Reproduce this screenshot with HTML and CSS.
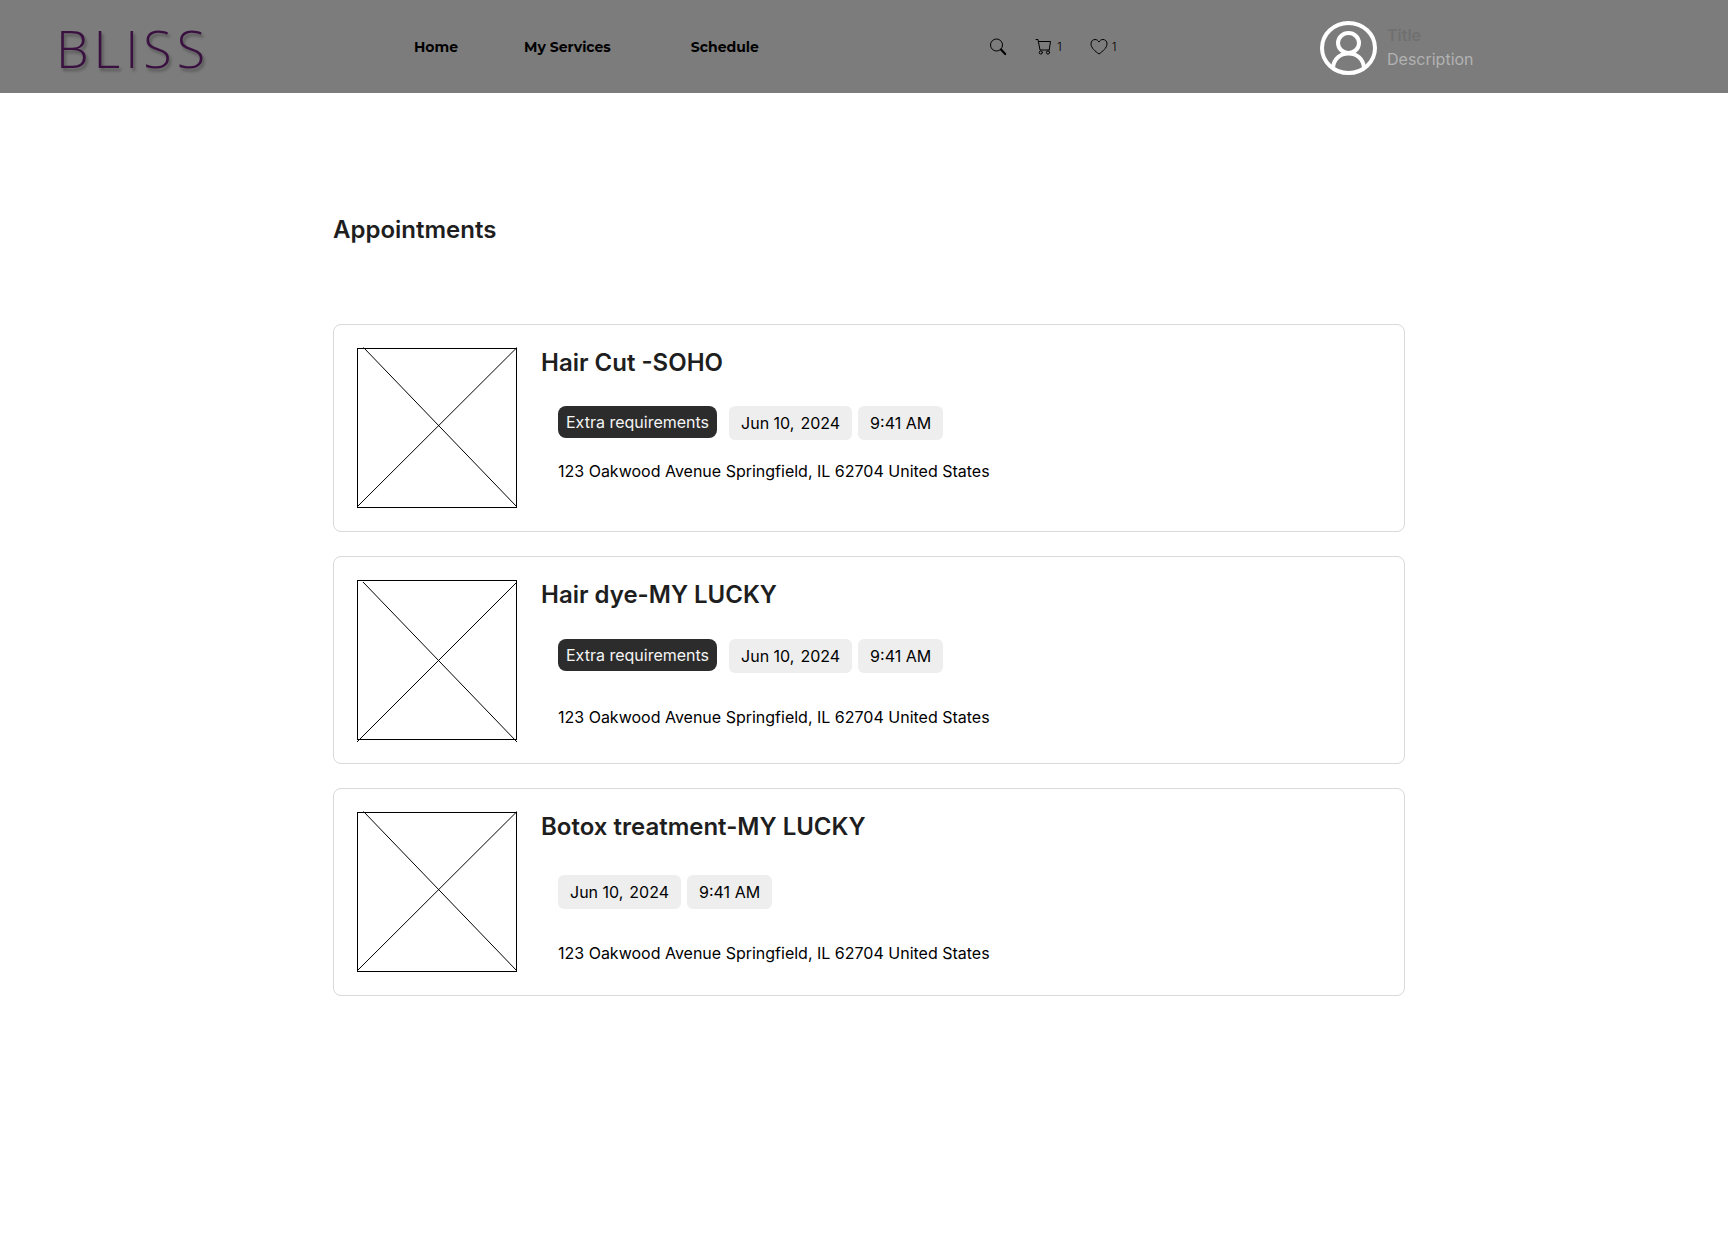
FILE: index.html
```html
<!DOCTYPE html>
<html lang="en">
<head>
<meta charset="utf-8">
<meta name="viewport" content="width=device-width, initial-scale=1">
<title>Bliss - Appointments</title>
<link rel="stylesheet" href="styles.css">
</head>
<body>
<header class="header">
  <a class="logo" href="#">BLISS</a>
  <nav class="nav" aria-label="Main">
    <a href="#">Home</a>
    <a href="#">My Services</a>
    <a href="#">Schedule</a>
  </nav>
  <div class="tools">
    <button class="tool" type="button" aria-label="Search">
      <svg width="18" height="18" viewBox="0 0 18 18" fill="none" stroke="currentColor"><circle cx="7.500" cy="7" r="6"/><path d="M12 11.6L16.200 16" stroke-width="2.2" stroke-linecap="round"/></svg>
    </button>
    <button class="tool" type="button" aria-label="Cart, 1 item">
      <svg width="18" height="18" viewBox="0 0 18 18" fill="none" stroke="currentColor" stroke-linejoin="round" stroke-linecap="round"><path d="M1 1.5h2l2 10.500h9.200M3.300 3.500h12.200l-1.300 8.500"/><circle cx="5.800" cy="14.500" r="1.600"/><circle cx="13" cy="14.500" r="1.600"/></svg>
      <span>1</span>
    </button>
    <button class="tool" type="button" aria-label="Favourites, 1 item">
      <svg width="18" height="18" viewBox="0 0 18 18" fill="none" stroke="currentColor" stroke-linejoin="round"><path d="M9 16C5.500 13.500 1 10 1 5.800 1 3 3 1.500 5 1.500c1.800 0 3.200 1 4 2.600.8-1.600 2.200-2.600 4-2.600 2 0 4 1.500 4 4.300C17 10 12.500 13.500 9 16z"/></svg>
      <span>1</span>
    </button>
  </div>
  <div class="profile">
    <svg class="avatar" width="58" height="56" viewBox="0 -1 58 56" fill="none" stroke="#fff" stroke-width="4"><ellipse cx="28.500" cy="28" rx="26.500" ry="25"/><ellipse cx="28.500" cy="23" rx="10.500" ry="10"/><path d="M13 47.500C14 39 20 33.500 28.500 33.500S43 39 44 47.500"/></svg>
    <div class="profile-text">
      <div class="profile-title">Title</div>
      <div class="profile-desc">Description</div>
    </div>
  </div>
</header>

<main class="main">
  <h1 class="page-title">Appointments</h1>
  <div class="cards">
    <article class="card">
      <svg class="thumb" width="160" height="160" viewBox="0 0 160 160" fill="none" stroke="#000" aria-hidden="true"><rect x=".5" y=".5" width="159" height="159"/><path d="M6.500-.5L160 159M160-.5L0 159"/></svg>
      <div class="body">
        <h2 class="card-title">Hair Cut -SOHO</h2>
        <div class="meta">
          <button class="tag" type="button">Extra requirements</button>
          <div class="when">
            <button class="pill" type="button"><span>Jun 10,</span> <span>2024</span></button>
            <button class="pill" type="button">9:41 AM</button>
          </div>
        </div>
        <p class="address">123 Oakwood Avenue Springfield, IL 62704 United States</p>
      </div>
    </article>
    <article class="card card-roomy">
      <svg class="thumb" width="160" height="160" viewBox="0 0 160 160" fill="none" stroke="#000" aria-hidden="true"><rect x=".5" y=".5" width="159" height="159"/><path d="M6 2L160 162M160 2L0 162"/></svg>
      <div class="body">
        <h2 class="card-title">Hair dye-MY LUCKY</h2>
        <div class="meta">
          <button class="tag" type="button">Extra requirements</button>
          <div class="when">
            <button class="pill" type="button"><span>Jun 10,</span> <span>2024</span></button>
            <button class="pill" type="button">9:41 AM</button>
          </div>
        </div>
        <p class="address">123 Oakwood Avenue Springfield, IL 62704 United States</p>
      </div>
    </article>
    <article class="card card-roomy card-plain">
      <svg class="thumb" width="160" height="160" viewBox="0 0 160 160" fill="none" stroke="#000" aria-hidden="true"><rect x=".5" y=".5" width="159" height="159"/><path d="M6.500-.5L160 159M160-.5L0 159"/></svg>
      <div class="body">
        <h2 class="card-title">Botox treatment-MY LUCKY</h2>
        <div class="meta">
          <div class="when">
            <button class="pill" type="button"><span>Jun 10,</span> <span>2024</span></button>
            <button class="pill" type="button">9:41 AM</button>
          </div>
        </div>
        <p class="address">123 Oakwood Avenue Springfield, IL 62704 United States</p>
      </div>
    </article>
  </div>
</main>
</body>
</html>
```
FILE: styles.css
```css
* { box-sizing: border-box; }

body {
  margin: 0;
  background: #fff;
  color: #000;
  font-family: Inter, "Liberation Sans", sans-serif;
  font-size: 16px;
}

h1, h2, p { margin: 0; }
a { color: inherit; text-decoration: none; }
svg { display: block; flex: none; }

button {
  border: 0;
  background: none;
  color: inherit;
  font: inherit;
  cursor: pointer;
}

.header {
  display: grid;
  grid-template-columns: 354fr 575fr 331fr 408fr;
  align-items: center;
  min-height: 93px;
  padding-left: 60px;
  background: #7c7c7c;
}

.logo {
  color: #3a1041;
  font-family: "Open Sans", sans-serif;
  font-size: 52px;
  font-weight: 300;
  line-height: 56px;
  letter-spacing: 5px;
  padding-top: 2px;
  margin-left: -4px;
  text-shadow: 2px 3px 3px rgba(0, 0, 0, .3);
}

.nav {
  display: flex;
  gap: 66px;
  font-family: Montserrat, Inter, sans-serif;
  font-size: 14px;
  font-weight: 700;
}

.nav a:last-child { margin-left: 14px; }

.tools {
  display: flex;
  gap: 28px;
}

.tool {
  display: flex;
  align-items: center;
  gap: 4px;
  padding: 0;
  font-size: 12px;
  font-weight: 300;
}

.profile {
  display: flex;
  align-items: center;
  gap: 9px;
}

.profile-text { line-height: 24px; }
.profile-title { color: #707070; font-weight: 600; }
.profile-desc { color: #b2b2b2; }

.main { padding: 122px 323px 48px 333px; }

.page-title, .card-title {
  color: #1e1e1e;
  font-size: 24px;
  font-weight: 600;
  line-height: 29px;
}

.cards {
  display: grid;
  gap: 24px;
  margin-top: 80px;
}

.card {
  display: flex;
  gap: 24px;
  padding: 23px;
  border: 1px solid #d9d9d9;
  border-radius: 8px;
}

.thumb { overflow: visible; }

.meta {
  display: flex;
  align-items: flex-start;
  gap: 12px;
  margin: 29px 0 20px 17px;
}

.card-roomy .meta { margin-top: 30px; margin-bottom: 33px; }
.card-plain .meta { margin-top: 34px; }

.tag {
  padding: 8px;
  border-radius: 8px;
  background: #2c2c2c;
  color: #f5f5f5;
  line-height: 16px;
}

.when { display: flex; gap: 6px; }

.pill {
  display: flex;
  gap: 6px;
  padding: 6px 12px;
  border-radius: 6px;
  background: #eee;
  line-height: 22px;
}

.address {
  margin-left: 17px;
  line-height: 22px;
}
```
